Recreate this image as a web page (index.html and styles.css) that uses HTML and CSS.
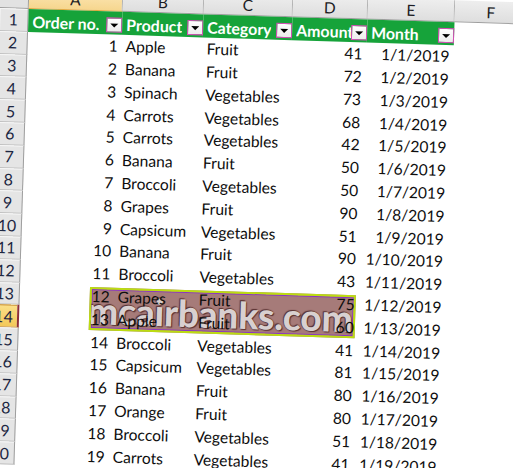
FILE: index.html
```html
<!DOCTYPE html>
<html lang="en">
<head>
<meta charset="utf-8">
<title>Sheet</title>
<link rel="stylesheet" href="styles.css">
</head>
<body>
<div class="sheet">
  <div class="grid">
    <div class="corner"></div>
    <div class="colhead active">A</div>
    <div class="colhead">B</div>
    <div class="colhead">C</div>
    <div class="colhead">D</div>
    <div class="colhead">E</div>
    <div class="colhead">F</div>
    <div class="colhead">G</div>

    <div class="rowhead">1</div>
    <div class="hcell"><span class="hlabel">Order no.</span><span class="filter"></span></div>
    <div class="hcell"><span class="hlabel">Product</span><span class="filter"></span></div>
    <div class="hcell"><span class="hlabel">Category</span><span class="filter"></span></div>
    <div class="hcell"><span class="hlabel">Amount</span><span class="filter"></span></div>
    <div class="hcell"><span class="hlabel">Month</span><span class="filter"></span></div>
    <div class="cell"></div><div class="cell"></div>

    <div class="rowhead">2</div><div class="cell num">1</div><div class="cell">Apple</div><div class="cell">Fruit</div><div class="cell num">41</div><div class="cell num">1/1/2019</div><div class="cell"></div><div class="cell"></div>
    <div class="rowhead">3</div><div class="cell num">2</div><div class="cell">Banana</div><div class="cell">Fruit</div><div class="cell num">72</div><div class="cell num">1/2/2019</div><div class="cell"></div><div class="cell"></div>
    <div class="rowhead">4</div><div class="cell num">3</div><div class="cell">Spinach</div><div class="cell">Vegetables</div><div class="cell num">73</div><div class="cell num">1/3/2019</div><div class="cell"></div><div class="cell"></div>
    <div class="rowhead">5</div><div class="cell num">4</div><div class="cell">Carrots</div><div class="cell">Vegetables</div><div class="cell num">68</div><div class="cell num">1/4/2019</div><div class="cell"></div><div class="cell"></div>
    <div class="rowhead">6</div><div class="cell num">5</div><div class="cell">Carrots</div><div class="cell">Vegetables</div><div class="cell num">42</div><div class="cell num">1/5/2019</div><div class="cell"></div><div class="cell"></div>
    <div class="rowhead">7</div><div class="cell num">6</div><div class="cell">Banana</div><div class="cell">Fruit</div><div class="cell num">50</div><div class="cell num">1/6/2019</div><div class="cell"></div><div class="cell"></div>
    <div class="rowhead">8</div><div class="cell num">7</div><div class="cell">Broccoli</div><div class="cell">Vegetables</div><div class="cell num">50</div><div class="cell num">1/7/2019</div><div class="cell"></div><div class="cell"></div>
    <div class="rowhead">9</div><div class="cell num">8</div><div class="cell">Grapes</div><div class="cell">Fruit</div><div class="cell num">90</div><div class="cell num">1/8/2019</div><div class="cell"></div><div class="cell"></div>
    <div class="rowhead">10</div><div class="cell num">9</div><div class="cell">Capsicum</div><div class="cell">Vegetables</div><div class="cell num">51</div><div class="cell num">1/9/2019</div><div class="cell"></div><div class="cell"></div>
    <div class="rowhead">11</div><div class="cell num">10</div><div class="cell">Banana</div><div class="cell">Fruit</div><div class="cell num">90</div><div class="cell num">1/10/2019</div><div class="cell"></div><div class="cell"></div>
    <div class="rowhead">12</div><div class="cell num">11</div><div class="cell">Broccoli</div><div class="cell">Vegetables</div><div class="cell num">43</div><div class="cell num">1/11/2019</div><div class="cell"></div><div class="cell"></div>
    <div class="rowhead">13</div><div class="cell num">12</div><div class="cell">Grapes</div><div class="cell">Fruit</div><div class="cell num">75</div><div class="cell num">1/12/2019</div><div class="cell"></div><div class="cell"></div>
    <div class="rowhead active">14</div><div class="cell num">13</div><div class="cell">Apple</div><div class="cell">Fruit</div><div class="cell num">60</div><div class="cell num">1/13/2019</div><div class="cell"></div><div class="cell"></div>
    <div class="rowhead">15</div><div class="cell num">14</div><div class="cell">Broccoli</div><div class="cell">Vegetables</div><div class="cell num">41</div><div class="cell num">1/14/2019</div><div class="cell"></div><div class="cell"></div>
    <div class="rowhead">16</div><div class="cell num">15</div><div class="cell">Capsicum</div><div class="cell">Vegetables</div><div class="cell num">81</div><div class="cell num">1/15/2019</div><div class="cell"></div><div class="cell"></div>
    <div class="rowhead">17</div><div class="cell num">16</div><div class="cell">Banana</div><div class="cell">Fruit</div><div class="cell num">80</div><div class="cell num">1/16/2019</div><div class="cell"></div><div class="cell"></div>
    <div class="rowhead">18</div><div class="cell num">17</div><div class="cell">Orange</div><div class="cell">Fruit</div><div class="cell num">80</div><div class="cell num">1/17/2019</div><div class="cell"></div><div class="cell"></div>
    <div class="rowhead">19</div><div class="cell num">18</div><div class="cell">Broccoli</div><div class="cell">Vegetables</div><div class="cell num">51</div><div class="cell num">1/18/2019</div><div class="cell"></div><div class="cell"></div>
    <div class="rowhead">20</div><div class="cell num">19</div><div class="cell">Carrots</div><div class="cell">Vegetables</div><div class="cell num">41</div><div class="cell num">1/19/2019</div><div class="cell"></div><div class="cell"></div>
  </div>
  <div class="watermark"><span class="wm-text">mcairbanks.com</span></div>
</div>
</body>
</html>
```

FILE: styles.css
```css
html, body {
  margin: 0;
  padding: 0;
  background: #ffffff;
}

body {
  width: 513px;
  height: 468px;
  overflow: hidden;
  font-family: Lato, "Liberation Sans", sans-serif;
}

.sheet {
  position: relative;
  width: 600px;
  margin-top: -14px;
  transform: rotate(1.8deg);
  transform-origin: 0 14px;
}

.grid {
  position: relative;
  z-index: 1;
  display: grid;
  grid-template-columns: 29px 94px 81px 89px 75px 87px 73px 72px;
  grid-template-rows: 22px repeat(21, 22.8px);
}

.corner {
  background: #e2e2e2;
  border-right: 1px solid #9e9e9e;
  border-bottom: 1px solid #9e9e9e;
  box-sizing: border-box;
}

.colhead {
  box-sizing: border-box;
  display: flex;
  align-items: center;
  justify-content: center;
  background: linear-gradient(#eeeeee, #dedede);
  border-right: 1px solid #b3b3b3;
  border-bottom: 1px solid #9e9e9e;
  font-size: 15.5px;
  color: #1c1c24;
}

.colhead.active {
  background: linear-gradient(#fde9bb, #f6d68e);
  border-bottom-color: #e1a940;
}

.rowhead {
  box-sizing: border-box;
  display: flex;
  align-items: center;
  justify-content: center;
  background: #e5e5e5;
  border-right: 1px solid #9e9e9e;
  border-bottom: 1px solid #c2c2c2;
  box-shadow: inset 1px 1px 0 #f6f6f6;
  font-size: 16px;
  color: #1d2742;
}

.rowhead.active {
  background: linear-gradient(#fbe08a, #f3c859);
  border-right: 2px solid #8e2f38;
  border-bottom-color: #c78d36;
  box-shadow: inset 0 1px 0 #c78d36;
}

.hcell {
  display: flex;
  align-items: center;
  min-width: 0;
  padding-left: 4px;
  background: #16a33a;
  color: #ffffff;
  font-weight: 700;
  font-size: 15.9px;
  white-space: nowrap;
}

.hlabel {
  flex: 0 1 auto;
  min-width: 0;
  overflow: hidden;
  padding-top: 2px;
}

.filter {
  flex: 0 0 auto;
  margin-left: auto;
  align-self: flex-end;
  margin-bottom: 2px;
  box-sizing: border-box;
  width: 16px;
  height: 15px;
  display: flex;
  align-items: center;
  justify-content: center;
  background: linear-gradient(#ffffff, #ececec);
  border: 1px solid #d84cb8;
}

.filter::after {
  content: "";
  width: 0;
  height: 0;
  margin-top: 2px;
  border-left: 4px solid transparent;
  border-right: 4px solid transparent;
  border-top: 4px solid #000000;
}

.cell {
  display: flex;
  align-items: center;
  padding: 0 4px;
  min-width: 0;
  white-space: nowrap;
  font-size: 15.6px;
  color: #0e0e0e;
}

.cell.num {
  justify-content: flex-end;
}

.watermark {
  position: absolute;
  z-index: 0;
  left: 99px;
  top: 298px;
  width: 266px;
  height: 43px;
  box-sizing: border-box;
  border: 2px solid #bcdc12;
  box-shadow: inset 0 0 0 1px #8a34c6;
  background: #a67b79;
  display: flex;
  align-items: center;
  overflow: hidden;
}

.wm-text {
  font-family: Lato, "Liberation Sans", sans-serif;
  font-weight: 900;
  font-size: 37px;
  letter-spacing: -0.2px;
  color: rgba(255, 255, 255, 0.78);
  text-shadow: 0 0 1px #4e2a2a, 1px 1px 1px #5a3232, -1px -1px 1px #5a3232;
  margin-left: -4px;
  margin-top: 2px;
  white-space: nowrap;
}
```
